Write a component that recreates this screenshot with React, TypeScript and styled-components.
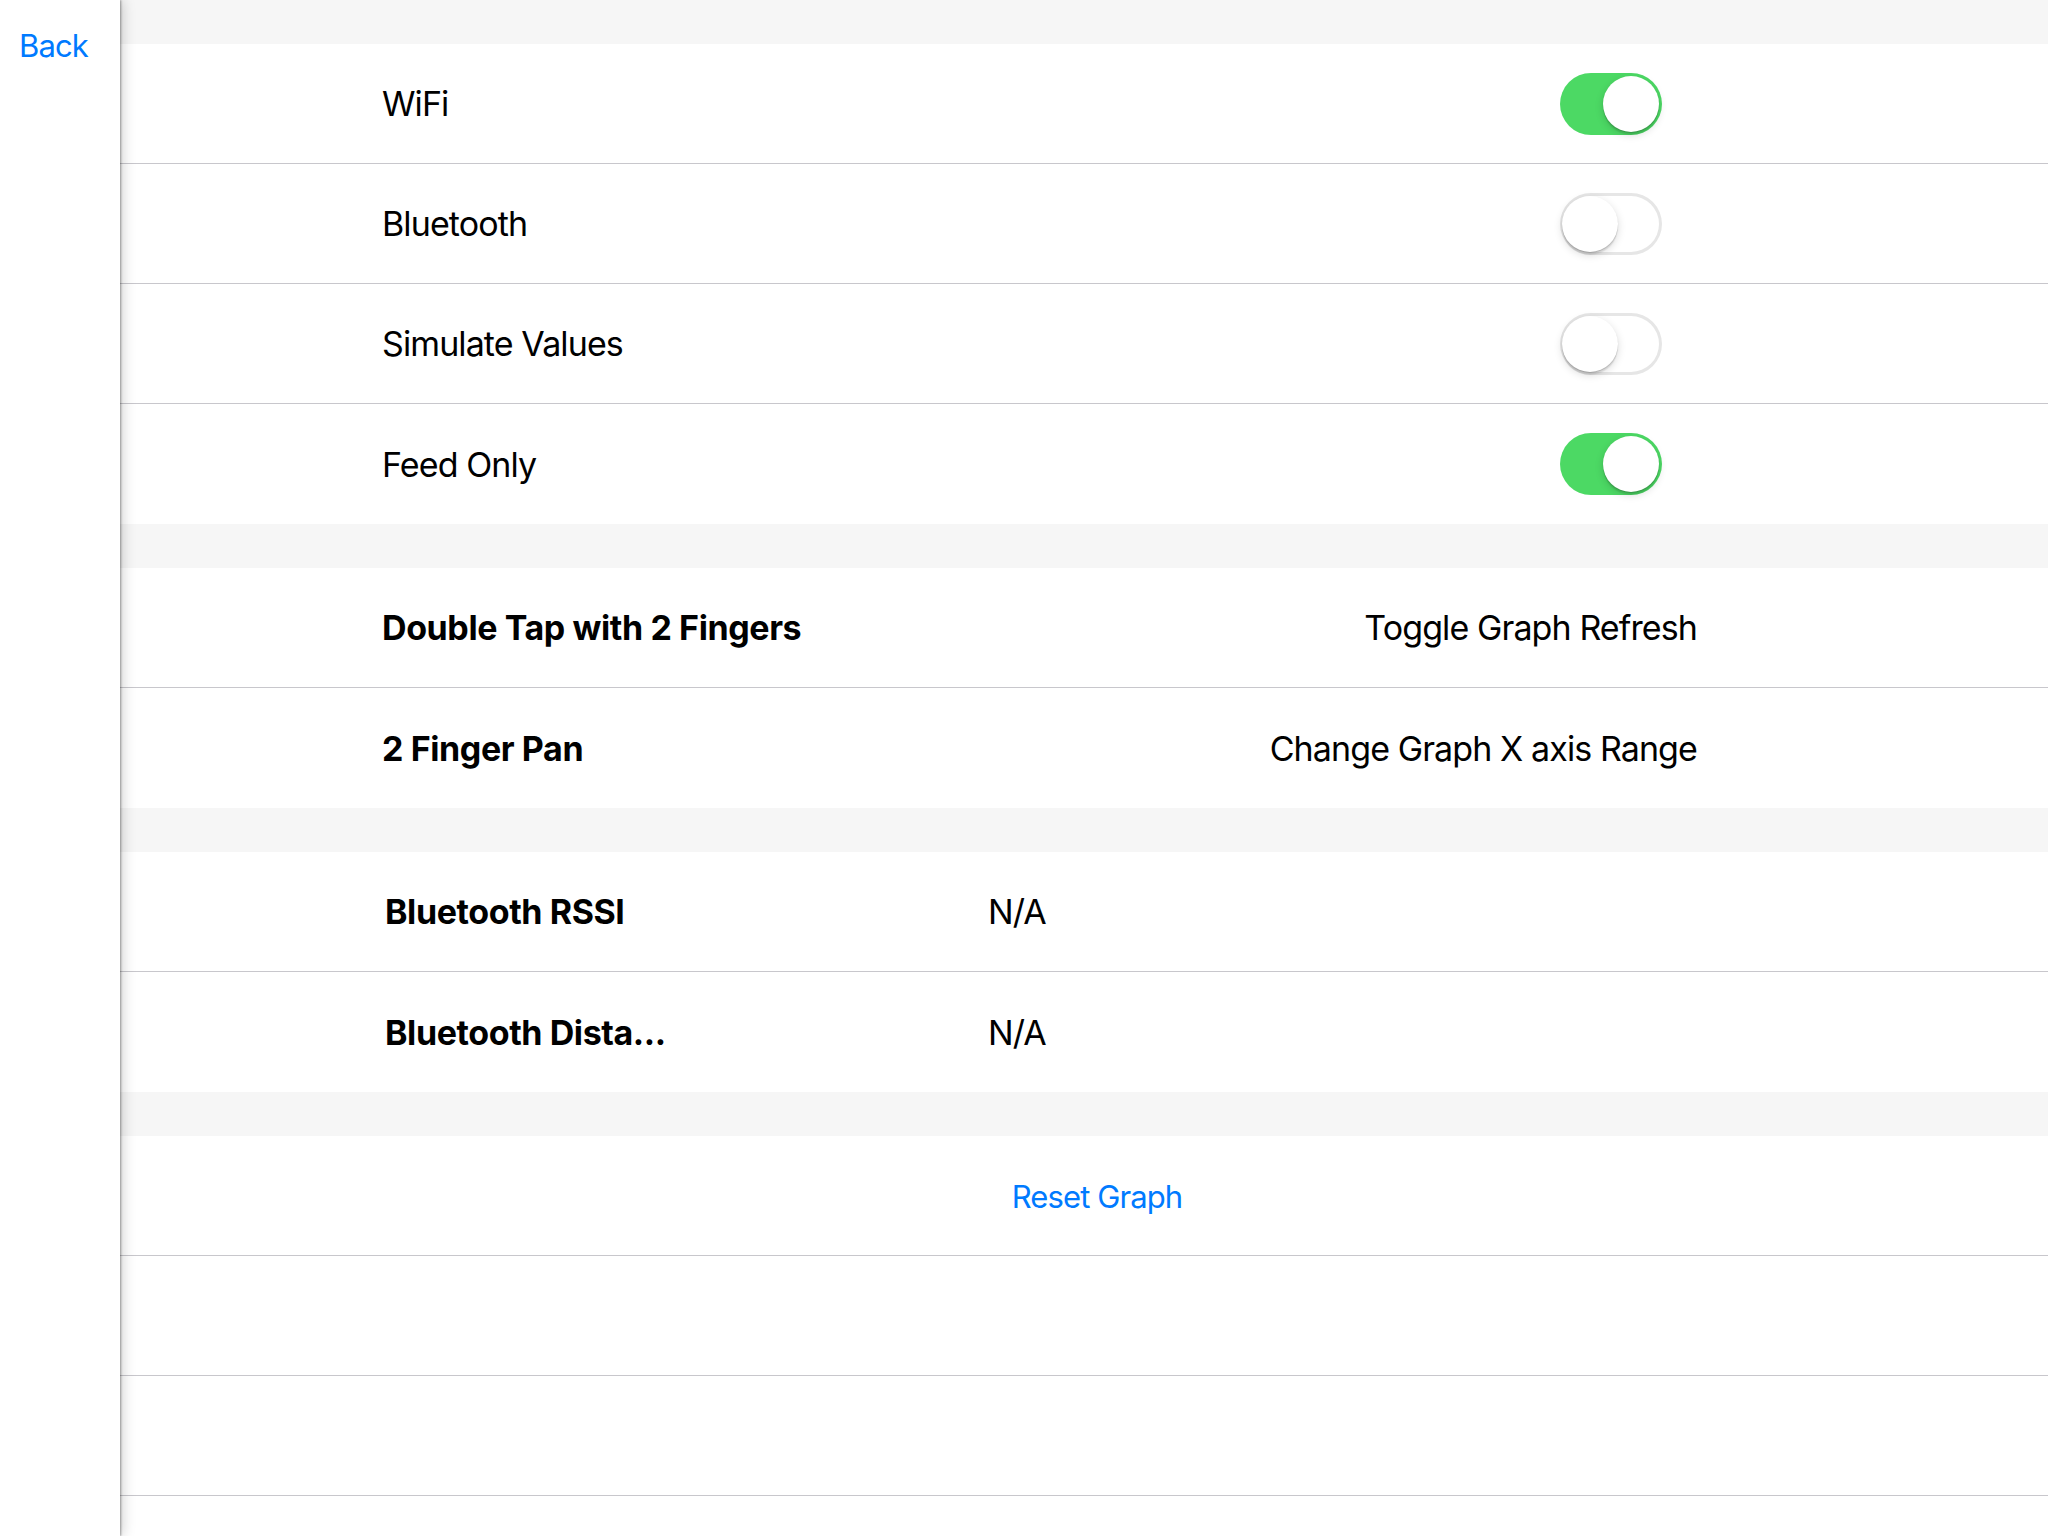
import React from "react";
import styled, { createGlobalStyle } from "styled-components";

const GlobalStyle = createGlobalStyle`
  html, body {
    margin: 0;
    padding: 0;
    background: #ffffff;
  }
  body {
    font-family: Inter, "Noto Sans", "Liberation Sans", sans-serif;
    -webkit-font-smoothing: antialiased;
  }
`;

const Page = styled.div`
  display: flex;
  width: 2048px;
  height: 1536px;
  overflow: hidden;
  background: #ffffff;
`;

const Sidebar = styled.aside`
  position: relative;
  z-index: 2;
  flex: 0 0 120px;
  background: #ffffff;
  box-shadow: 1px 0 2px rgba(0, 0, 0, 0.35), 3px 0 12px rgba(0, 0, 0, 0.18);
  padding-top: 26px;
  padding-left: 19px;
  box-sizing: border-box;
`;

const BackLink = styled.a`
  display: inline-block;
  color: #007aff;
  font-size: 31px;
  letter-spacing: -0.9px;
  line-height: 40px;
  text-decoration: none;
  cursor: pointer;
`;

const Content = styled.main`
  flex: 1;
  display: flex;
  flex-direction: column;
  background: #ffffff;
`;

const SectionGap = styled.div`
  flex: 0 0 44px;
  background: #f6f6f6;
`;

const Section = styled.section`
  display: flex;
  flex-direction: column;
  background: #ffffff;
`;

const Row = styled.div<{ $last?: boolean }>`
  box-sizing: border-box;
  flex: 0 0 120px;
  height: 120px;
  display: flex;
  align-items: center;
  padding: 0 351px 0 262px;
  border-bottom: ${(p) => (p.$last ? "none" : "1px solid #c8c7cc")};
`;

const Label = styled.span`
  flex: 1;
  color: #000;
  font-size: 34px;
  font-weight: 400;
  letter-spacing: -0.9px;
  white-space: nowrap;
`;

const ActionLabel = styled.span`
  flex: 1;
  color: #000;
  font-size: 34px;
  font-weight: 700;
  letter-spacing: -0.4px;
  white-space: nowrap;
`;

const ActionValue = styled.span`
  color: #000;
  font-size: 34px;
  font-weight: 400;
  letter-spacing: -0.9px;
  white-space: nowrap;
`;

const InfoLabel = styled.span`
  flex: 0 0 603px;
  margin-left: 3px;
  color: #000;
  font-size: 34px;
  font-weight: 700;
  letter-spacing: -0.4px;
  white-space: nowrap;
`;

const InfoValue = styled.span`
  color: #000;
  font-size: 34px;
  font-weight: 400;
  letter-spacing: -0.9px;
  white-space: nowrap;
`;

const ToggleTrack = styled.div<{ $on: boolean }>`
  box-sizing: border-box;
  width: 102px;
  height: 62px;
  margin-right: 35px;
  border-radius: 31px;
  padding: 3px;
  display: flex;
  justify-content: ${(p) => (p.$on ? "flex-end" : "flex-start")};
  align-items: center;
  background: ${(p) => (p.$on ? "#4cd964" : "#ffffff")};
  box-shadow: ${(p) => (p.$on ? "none" : "inset 0 0 0 3px #e6e6e6")};
`;

const ToggleKnob = styled.div<{ $on: boolean }>`
  width: 56px;
  height: 56px;
  border-radius: 50%;
  background: #ffffff;
  margin-left: ${(p) => (p.$on ? "0" : "-1px")};
  box-shadow: 0 3px 8px rgba(0, 0, 0, 0.15), 0 1px 1px rgba(0, 0, 0, 0.16),
    0 3px 1px rgba(0, 0, 0, 0.08);
`;

const CenterRow = styled(Row)`
  justify-content: center;
  padding: 0;
`;

const LinkButton = styled.span`
  color: #007aff;
  font-size: 31px;
  letter-spacing: -0.9px;
  margin-left: 26px;
  margin-top: 2px;
`;

const Toggle = ({ on }: { on: boolean }) => (
  <ToggleTrack $on={on}>
    <ToggleKnob $on={on} />
  </ToggleTrack>
);

const toggles = [
  { label: "WiFi", on: true },
  { label: "Bluetooth", on: false },
  { label: "Simulate Values", on: false },
  { label: "Feed Only", on: true },
];

const gestures = [
  { label: "Double Tap with 2 Fingers", value: "Toggle Graph Refresh" },
  { label: "2 Finger Pan", value: "Change Graph X axis Range" },
];

const info = [
  { label: "Bluetooth RSSI", value: "N/A" },
  { label: "Bluetooth Dista...", value: "N/A" },
];

export default function App() {
  return (
    <>
      <GlobalStyle />
      <Page>
        <Sidebar>
          <BackLink>Back</BackLink>
        </Sidebar>
        <Content>
          <SectionGap />
          <Section>
            {toggles.map((t, i) => (
              <Row key={t.label} $last={i === toggles.length - 1}>
                <Label>{t.label}</Label>
                <Toggle on={t.on} />
              </Row>
            ))}
          </Section>
          <SectionGap />
          <Section>
            {gestures.map((g, i) => (
              <Row key={g.label} $last={i === gestures.length - 1}>
                <ActionLabel>{g.label}</ActionLabel>
                <ActionValue>{g.value}</ActionValue>
              </Row>
            ))}
          </Section>
          <SectionGap />
          <Section>
            {info.map((r, i) => (
              <Row key={r.label} $last={i === info.length - 1}>
                <InfoLabel>{r.label}</InfoLabel>
                <InfoValue>{r.value}</InfoValue>
              </Row>
            ))}
          </Section>
          <SectionGap />
          <Section>
            <CenterRow>
              <LinkButton>Reset Graph</LinkButton>
            </CenterRow>
            <Row />
            <Row />
            <Row />
          </Section>
        </Content>
      </Page>
    </>
  );
}
